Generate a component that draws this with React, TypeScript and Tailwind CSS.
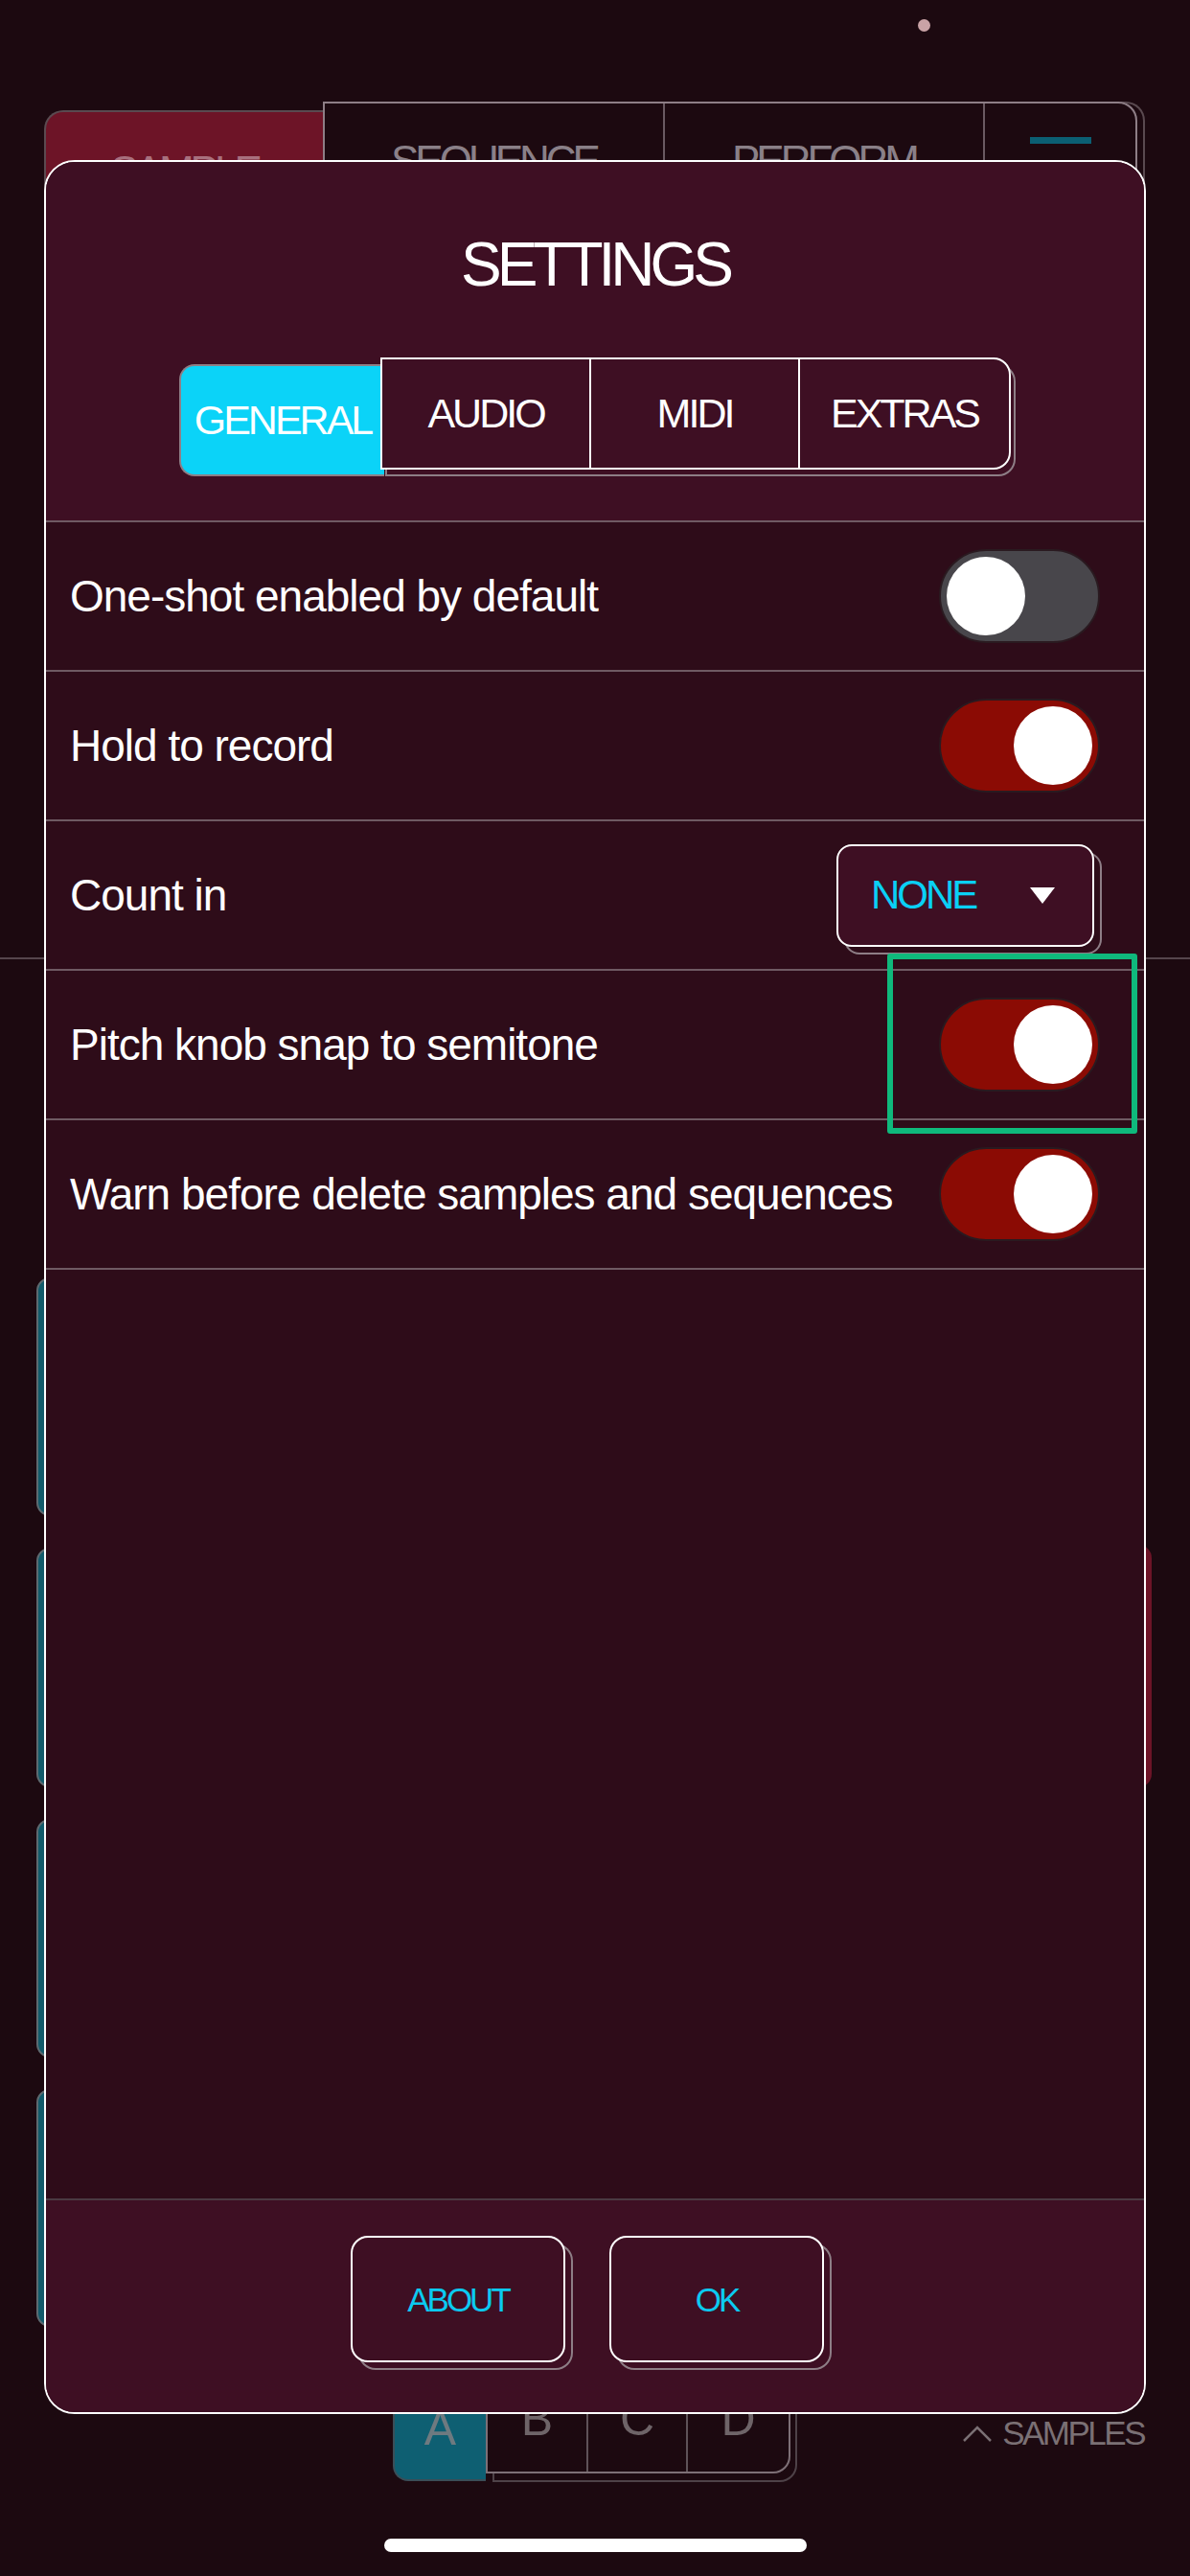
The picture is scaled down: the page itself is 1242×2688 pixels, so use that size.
function Toggle({ on }: { on: boolean }) {
  return (
    <div
      className={`flex h-[98px] w-[168px] shrink-0 items-center rounded-full border-2 border-[#2a1a20] px-[6px] ${
        on ? "justify-end bg-[#8b0b04]" : "justify-start bg-[#48464b]"
      }`}
    >
      <div className="h-[82px] w-[82px] rounded-full bg-white" />
    </div>
  );
}

function SettingRow({ label, children }: { label: string; children: React.ReactNode }) {
  return (
    <div className="flex h-[156px] shrink-0 items-center justify-between border-b-2 border-[#6f5a63] pl-[25px] pr-[46px]">
      <span className="whitespace-nowrap text-[46px] leading-none tracking-[-1px] text-white">{label}</span>
      {children}
    </div>
  );
}

export default function App() {
  return (
    <div className="relative h-[2688px] w-[1242px] overflow-hidden bg-[#1c0910] font-['Liberation_Sans',Arial,sans-serif]">
      {/* app behind the dialog */}
      <div className="flex h-full flex-col">
        <div className="flex h-[106px] shrink-0 justify-end pr-[271px] pt-[20px]">
          <div className="h-[13px] w-[13px] rounded-full bg-[#c9a3a6]" />
        </div>

        <div className="flex h-[893px] shrink-0 items-start pl-[46px]">
          <div className="mt-[9px] h-[150px] w-[291px] rounded-tl-[20px] border-2 border-r-0 border-[#5a4a50] bg-[#6d1427] pt-[40px] text-center text-[44px] leading-none tracking-[-4px] text-[#a8707e]">
            SAMPLE
          </div>
          <div className="grid h-[150px] w-[850px] grid-cols-[355px_334px_1fr] divide-x-2 divide-[#6a5a62] rounded-tr-[20px] border-2 border-[#8e7e86] shadow-[8px_0_0_-2px_#1c0910,8px_0_0_0_#5a4a50]">
            <div className="pt-[38px] text-center text-[44px] leading-none tracking-[-4px] text-[#8a8088]">SEQUENCE</div>
            <div className="pt-[38px] text-center text-[44px] leading-none tracking-[-4px] text-[#8a8088]">PERFORM</div>
            <div className="flex justify-center pt-[35px]">
              <div className="h-[7px] w-[64px] bg-[#0b5f73]" />
            </div>
          </div>
        </div>

        <div className="flex h-[1442px] shrink-0 justify-between border-t-2 border-[#55454c]">
          <div className="ml-[38px] flex flex-col gap-[33px] pt-[332px]">
            {[249, 250, 249, 248].map((h, i) => (
              <div
                key={i}
                className="w-[200px] rounded-[14px] border-2 border-[#5d6a70] bg-[#125b6b]"
                style={{ height: h }}
              />
            ))}
          </div>
          <div className="mr-[40px] mt-[611px] h-[253px] w-[60px] rounded-r-[14px] bg-[#6d1427]" />
        </div>

        <div className="flex h-[160px] shrink-0 items-start">
          <div className="ml-[410px] flex items-start">
            <div className="mt-[8px] flex h-[140px] w-[97px] items-end justify-center rounded-bl-[16px] border-2 border-r-0 border-[#3a4e58] bg-[#0e5f72] pb-[28px] text-[50px] leading-none text-[#6e7a80]">
              A
            </div>
            <div className="grid h-[140px] w-[318px] grid-cols-3 divide-x-2 divide-[#5e5258] rounded-br-[18px] border-2 border-[#7d6f76] shadow-[7px_9px_0_-2px_#1c0910,7px_9px_0_0_#4e4248]">
              {["B", "C", "D"].map((l) => (
                <div key={l} className="flex items-end justify-center pb-[30px] text-[50px] leading-none text-[#6e6468]">
                  {l}
                </div>
              ))}
            </div>
          </div>
          <div className="ml-auto mr-[48px] mt-[80px] flex items-center gap-[10px] text-[35px] leading-none tracking-[-2.5px] text-[#7a7074]">
            <svg width="32" height="18" viewBox="0 0 32 18" fill="none">
              <path d="M2 17 L16 3 L30 17" stroke="#7a7074" strokeWidth="2.5" />
            </svg>
            SAMPLES
          </div>
        </div>

        <div className="mx-auto mt-[48px] h-[14px] w-[441px] rounded-full bg-white" />
      </div>

      {/* settings dialog */}
      <div className="absolute left-[46px] top-[167px] flex h-[2352px] w-[1150px] flex-col overflow-hidden rounded-[32px] border-2 border-white bg-[#2e0c19]">
        <div className="flex shrink-0 flex-col items-center border-b-2 border-[#6f5a63] bg-[#3e0f23] pb-[46px] pt-[75px]">
          <h1 className="text-[64px] leading-none tracking-[-5px] text-white">SETTINGS</h1>
          <div className="mt-[65px] flex h-[124px] items-start">
            <div className="mt-[7px] flex h-[117px] w-[214px] items-center justify-center rounded-l-[16px] border-2 border-r-0 border-[#8e7e86] bg-[#0bd3f8] text-[43px] leading-none tracking-[-3px] text-white">
              GENERAL
            </div>
            <div className="-ml-[4px] grid h-[117px] w-[658px] grid-cols-3 divide-x-2 divide-white rounded-r-[18px] border-2 border-white bg-[#3e0f23] shadow-[5px_7px_0_-2px_#3e0f23,5px_7px_0_0_#8e7e86]">
              {["AUDIO", "MIDI", "EXTRAS"].map((t) => (
                <div key={t} className="flex items-center justify-center text-[43px] leading-none tracking-[-3px] text-white">
                  {t}
                </div>
              ))}
            </div>
          </div>
        </div>

        <SettingRow label="One-shot enabled by default">
          <Toggle on={false} />
        </SettingRow>
        <SettingRow label="Hold to record">
          <Toggle on />
        </SettingRow>
        <SettingRow label="Count in">
          <div className="mr-[6px] flex h-[107px] w-[269px] items-center justify-between rounded-[16px] border-2 border-white bg-[#3e0f23] pl-[34px] pr-[39px] shadow-[8px_8px_0_-2px_#2e0c19,8px_8px_0_0_#8e7e86]">
            <span className="text-[42px] leading-none tracking-[-3px] text-[#0ad0f5]">NONE</span>
            <svg width="26" height="17" viewBox="0 0 26 17">
              <path d="M0 0 H26 L13 17 Z" fill="white" />
            </svg>
          </div>
        </SettingRow>
        <SettingRow label="Pitch knob snap to semitone">
          <div className="relative">
            <Toggle on />
            <div className="absolute -left-[54px] -top-[46px] h-[188px] w-[261px] rounded-[3px] border-[6px] border-[#0fb97c]" />
          </div>
        </SettingRow>
        <SettingRow label="Warn before delete samples and sequences">
          <Toggle on />
        </SettingRow>

        <div className="flex-1" />

        <div className="flex h-[223px] shrink-0 items-start justify-center gap-[46px] border-t-2 border-[#4b3a42] bg-[#3e0f23] pr-[16px] pt-[37px]">
          {["ABOUT", "OK"].map((b) => (
            <button
              key={b}
              className="flex h-[132px] w-[224px] items-center justify-center rounded-[18px] border-2 border-white bg-[#3e0f23] text-[35px] leading-none tracking-[-3px] text-[#0bcaf0] shadow-[8px_8px_0_-2px_#3e0f23,8px_8px_0_0_#8e7e86]"
            >
              {b}
            </button>
          ))}
        </div>
      </div>
    </div>
  );
}
